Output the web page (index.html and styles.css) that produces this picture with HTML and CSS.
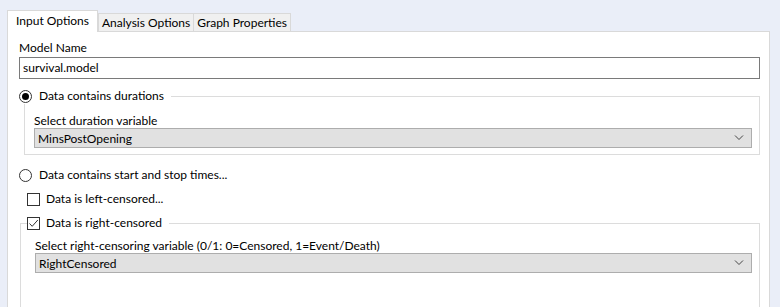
FILE: index.html
```html
<!DOCTYPE html>
<html lang="en">
<head>
    <meta charset="UTF-8">
    <title>Survival Model Options</title>
    <link rel="stylesheet" href="styles.css">
</head>
<body>
    <div class="tabs">
        <div class="tab active">Input Options</div>
        <div class="tab">Analysis Options</div>
        <div class="tab">Graph Properties</div>
    </div>

    <div class="panel">
        <div class="field-label">Model Name</div>
        <div class="textbox">survival.model</div>

        <fieldset class="group group-durations">
            <legend class="option">
                <span class="radio checked"></span>
                <span>Data contains durations</span>
            </legend>
            <div class="field-label">Select duration variable</div>
            <div class="combo">
                <span>MinsPostOpening</span>
                <svg class="chevron" width="10" height="6" viewBox="0 0 10 6"><path d="M1 0.5 L5 4.5 L9 0.5" fill="none" stroke="#444" stroke-width="1"/></svg>
            </div>
        </fieldset>

        <div class="option option-times">
            <span class="radio"></span>
            <span>Data contains start and stop times...</span>
        </div>

        <div class="option option-left">
            <span class="check"></span>
            <span>Data is left-censored...</span>
        </div>

        <fieldset class="group group-right">
            <legend class="option">
                <span class="check">
                    <svg width="11" height="11" viewBox="0 0 11 11"><path d="M1.5 5.5 L4.2 8.3 L9.8 2" fill="none" stroke="#333" stroke-width="1"/></svg>
                </span>
                <span>Data is right-censored</span>
            </legend>
            <div class="field-label">Select right-censoring variable (0/1: 0=Censored, 1=Event/Death)</div>
            <div class="combo">
                <span>RightCensored</span>
                <svg class="chevron" width="10" height="6" viewBox="0 0 10 6"><path d="M1 0.5 L5 4.5 L9 0.5" fill="none" stroke="#444" stroke-width="1"/></svg>
            </div>
        </fieldset>
    </div>
</body>
</html>
```

FILE: styles.css
```css
* {
    box-sizing: border-box;
}
body {
    margin: 0;
    padding: 0;
    background: #eaeef8;
    font-family: Lato, "Noto Sans", sans-serif;
    font-size: 12px;
    color: #000;
    height: 307px;
    overflow: hidden;
}
.tabs {
    display: flex;
    align-items: flex-end;
    padding: 10px 0 0 7px;
    height: 31px;
}
.tab {
    height: 18px;
    line-height: 18px;
    padding: 0 3px;
    background: #f0f0f0;
    border: 1px solid #d9d9d9;
    border-bottom: none;
    margin-left: -1px;
}
.tab.active {
    height: 22px;
    line-height: 20px;
    padding: 0 8px;
    background: #fff;
    margin-left: 0;
    margin-bottom: -1px;
    position: relative;
    z-index: 1;
    margin-right: 1px;
}
.panel {
    background: #fff;
    border: 1px solid #d9d9d9;
    border-bottom: none;
    margin: 0 10px 0 7px;
    padding: 8px 9px 0 11px;
    height: 276px;
    overflow: hidden;
}
.field-label {
    line-height: 15px;
    height: 15px;
}
.group .field-label {
    line-height: 14px;
    height: 14px;
}
.textbox {
    margin-top: 2px;
    height: 22px;
    line-height: 20px;
    border: 1px solid #7a7a7a;
    padding: 0 3px;
}
.option {
    display: flex;
    align-items: center;
    height: 16px;
    line-height: 16px;
}
.radio {
    width: 13px;
    height: 13px;
    border: 1px solid #333;
    border-radius: 50%;
    margin-right: 7px;
    display: flex;
    align-items: center;
    justify-content: center;
}
.radio.checked::after {
    content: "";
    width: 7px;
    height: 7px;
    border-radius: 50%;
    background: #000;
}
.check {
    width: 13px;
    height: 13px;
    border: 1px solid #333;
    margin-right: 6px;
    display: flex;
}
.group {
    border: 1px solid #dcdcdc;
    margin: 0;
    min-width: 0;
}
.group legend {
    padding: 0 7px 0 0;
    background: #fff;
}
.group-durations {
    margin: 9px 0 0 5px;
    padding: 10px 7px 6px 9px;
}
.group-durations legend {
    margin-left: -15px;
}
.group-right {
    margin: 8px 0 0 1px;
    padding: 8px 7px 0 14px;
    height: 100px;
}
.group-right legend {
    margin-left: -8px;
}
.combo {
    display: flex;
    align-items: center;
    justify-content: space-between;
    height: 20px;
    border: 1px solid #adadad;
    background: #e1e1e1;
    padding: 0 7px 0 3px;
}
.option-times {
    margin-top: 12px;
}
.option-left {
    margin-top: 8px;
    padding-left: 8px;
}
```
